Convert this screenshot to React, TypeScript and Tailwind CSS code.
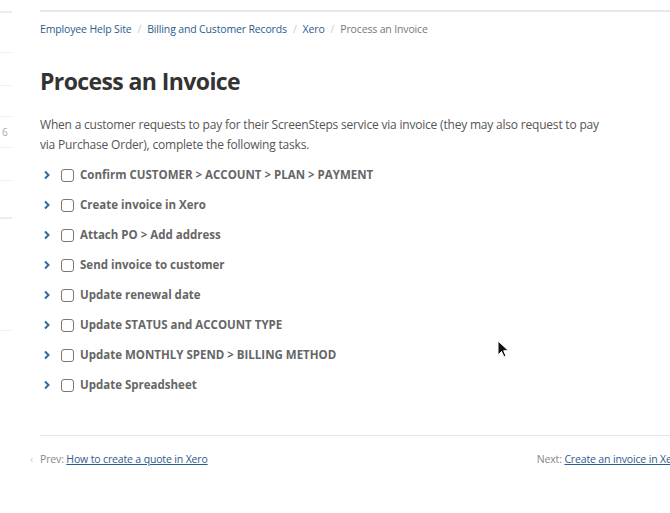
import React from "react";

const tasks = [
  "Confirm CUSTOMER > ACCOUNT > PLAN > PAYMENT",
  "Create invoice in Xero",
  "Attach PO > Add address",
  "Send invoice to customer",
  "Update renewal date",
  "Update STATUS and ACCOUNT TYPE",
  "Update MONTHLY SPEND > BILLING METHOD",
  "Update Spreadsheet",
];

function Chevron() {
  return (
    <svg width="8" height="10" viewBox="0 0 8 10" className="shrink-0">
      <path d="M2 1.5 L5.5 5 L2 8.5" fill="none" stroke="#2f6aa8" strokeWidth="2" />
    </svg>
  );
}

function Cursor() {
  return (
    <svg width="14" height="20" viewBox="0 0 14 20" className="absolute left-[497px] top-[340px]">
      <path d="M1 1 L1 15 L4.5 11.5 L7 17 L9 16 L6.7 10.7 L11.5 10.7 Z" fill="#111" stroke="#fff" strokeWidth="1" />
    </svg>
  );
}

export default function App() {
  return (
    <div
      className="relative w-[670px] h-[513px] overflow-hidden bg-white flex"
      style={{ fontFamily: '"Open Sans", "Noto Sans", sans-serif' }}
    >
      <aside className="w-[12px] shrink-0 flex flex-col pt-[11px]">
        <div className="h-[2px] bg-[#ececec]" />
        <div className="h-[40px] border-b border-[#f0f0f0]" />
        <div className="h-[33px] border-b border-[#f0f0f0]" />
        <div className="h-[31px] border-b border-[#f0f0f0]" />
        <div className="h-[31px] border-b border-[#f0f0f0] text-[10px] text-[#aaa] leading-[31px] pl-[2px]">6</div>
        <div className="h-[33px] border-b border-[#f0f0f0]" />
        <div className="h-[38px] border-b-2 border-[#ececec]" />
        <div className="h-[112px] border-b border-[#f0f0f0]" />
      </aside>

      <main className="ml-[28px] w-[642px] shrink-0 pt-[10px]">
        <div className="h-[2px] bg-[#e8e8e8]" />
        <nav className="flex items-center gap-[6px] text-[10.5px] tracking-[-0.15px] mt-[10px] h-[16px]">
          <span className="text-[#2b5b8f]">Employee Help Site</span>
          <span className="text-[#ccc]">/</span>
          <span className="text-[#2b5b8f]">Billing and Customer Records</span>
          <span className="text-[#ccc]">/</span>
          <span className="text-[#2b5b8f]">Xero</span>
          <span className="text-[#ccc]">/</span>
          <span className="text-[#777]">Process an Invoice</span>
        </nav>

        <h1 className="mt-[27px] text-[23px] leading-[32px] font-bold text-[#333] tracking-[-0.6px]">
          Process an Invoice
        </h1>

        <p className="mt-[18px] w-[570px] text-[12px] tracking-[-0.2px] leading-[20px] text-[#555]">
          When a customer requests to pay for their ScreenSteps service via invoice (they may also request to pay
          via Purchase Order), complete the following tasks.
        </p>

        <ul className="mt-[5px] flex flex-col">
          {tasks.map((t) => (
            <li key={t} className="h-[30px] flex items-center">
              <span className="w-[21px] pl-[3px] flex items-center">
                <Chevron />
              </span>
              <span className="w-[13px] h-[13px] border-[1.5px] border-[#777] rounded-[3px] shrink-0" />
              <span className="ml-[6px] text-[11.5px] font-bold text-[#666]">{t}</span>
            </li>
          ))}
        </ul>

        <div className="mt-[35px] h-px bg-[#e6e6e6]" />

        <div className="mt-[16px] flex items-center justify-between text-[10.5px] tracking-[-0.15px] text-[#888]">
          <div className="flex items-center -ml-[10px]">
            <span className="w-[10px] text-[#ccc]">‹</span>
            <span>Prev:&nbsp;</span>
            <a className="text-[#2b5b8f] underline">How to create a quote in Xero</a>
          </div>
          <div className="flex items-center whitespace-nowrap">
            <span>Next:&nbsp;</span>
            <a className="text-[#2b5b8f] underline">Create an invoice in Xero</a>
          </div>
        </div>
      </main>
      <Cursor />
    </div>
  );
}
